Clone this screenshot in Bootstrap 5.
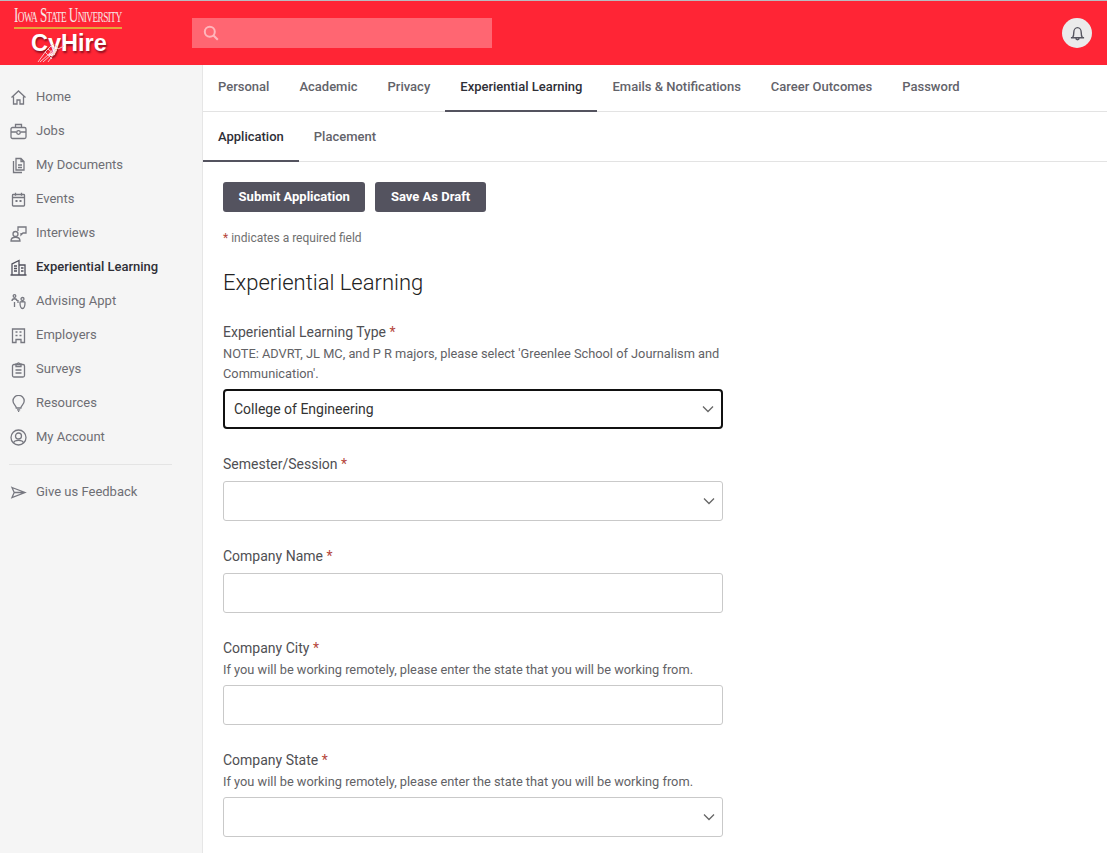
<!DOCTYPE html>
<html lang="en">
<head>
<meta charset="utf-8">
<title>CyHire</title>
<link rel="stylesheet" href="https://cdn.jsdelivr.net/npm/bootstrap@5.3.0/dist/css/bootstrap.min.css">
<style>
html,body{height:853px;overflow:hidden}
body{font-family:Roboto,"Liberation Sans",sans-serif;font-size:14px;color:#333;background:#fff}
.topbar{height:65px;background:#ff2535;border-top:1px solid #b8bcc0}
.logo-box{width:192px;height:64px;position:relative;flex:none}
.logo-isu{position:absolute;left:14px;top:2px;font-family:"Liberation Serif",serif;color:#f7e6e6;font-size:21px;line-height:24px;letter-spacing:-1px;white-space:nowrap;font-variant:small-caps;transform:scaleX(.625);transform-origin:left}
.logo-line{position:absolute;left:14px;top:26px;width:108px;height:2px;background:#e8a33a}
.logo-cy{position:absolute;left:31px;top:29px;font-family:"Liberation Sans",sans-serif;font-weight:700;font-size:23.5px;line-height:26px;color:#fff;text-shadow:1px 2px 2px #8a1020;white-space:nowrap}
.logo-foot{position:absolute;left:37px;top:41px}
.searchbox{width:300px;height:30px;background:#ff6672;margin-top:17px;padding-left:11px}
.bell-btn{width:30px;height:30px;background:#ebebeb;margin-right:15px}
.sidebar{width:203px;height:788px;background:#f5f5f5;border-right:1px solid #e6e6e6;padding-top:15px;flex:none}
.side-link{height:34px;padding-left:10px;color:#6e6e74;font-size:13px;text-decoration:none;gap:9px}
.side-link svg{width:17px;height:17px;flex:none;fill:none;stroke:#777880;stroke-width:1.3}
.side-link.on{color:#2f2f37;font-weight:500}
.side-link.on svg{stroke:#50505c}
.side-rule{margin:10px 30px 10px 9px;border-top:1px solid #e4e4e4;opacity:1}
.tabrow{border-bottom:1px solid #e3e3e3;padding:0}
.tabrow a{display:block;padding:0 15px;color:#63636a;font-size:13px;font-weight:500;text-decoration:none;margin-bottom:-1px;border-bottom:2px solid transparent}
.tabrow a.on{color:#2f2f37;border-bottom-color:#54535f}
.tab-one{height:47px}
.tab-one a{line-height:44px;height:47px}
.tab-two{height:50px}
.tab-two a{line-height:49px;height:50px}
.pane{padding:20px 20px 0}
.btn-row{gap:10px}
.btn-dk{background:#54535f;color:#fff;font-size:13px;font-weight:700;height:30px;padding:0 15.6px;border:0;border-radius:3px;line-height:30px}
.req-note{font-size:12px;color:#6f6f6f;margin:18px 0 0;line-height:16px}
.req{color:#b5473c}
.pane-title{font-size:22px;font-weight:300;color:#222;line-height:28px;margin:23px 0 0}
.fld{width:500px}
.fld-first{margin-top:25px}
.fld-label{font-size:14px;color:#4f4f53;line-height:20px;margin:0;display:block}
.fld-help{font-size:12.8px;color:#626266;line-height:20px;padding-top:2px}
.fld-input{height:40px;border:1px solid #c9c9c9;border-radius:3px;font-size:14px;color:#333;padding:0 30px 0 10px;margin-top:7px}
.fld-input.form-select{background-image:url("data:image/svg+xml,%3csvg xmlns='http://www.w3.org/2000/svg' viewBox='0 0 12 8'%3e%3cpath fill='none' stroke='%23666' stroke-width='1.3' d='M1 1.500 6 6.500 11 1.500'/%3e%3c/svg%3e");background-size:12px 8px;background-position:right 7px center;padding-right:30px}
.fld-input.focused{border:2px solid #111;border-radius:4px;padding-left:9px;margin-top:5px;height:40px}
.fld-input.notop{margin-top:5px}
.fld-gap{margin-top:25px}
</style>
</head>
<body>
<header class="topbar d-flex">
  <div class="logo-box">
    <div class="logo-isu">Iowa State University</div>
    <div class="logo-line"></div>
    <div class="logo-cy">CyHire</div>
    <svg class="logo-foot" width="28" height="21" viewBox="0 0 28 21" fill="none" stroke="#f6c6ca" stroke-width="1"><path d="M1 20 9 9 16 2M3 20 12 12 18 5M6 20 15 12 19 7M11 20 19 9M18 2 21 7 27 4M8 10 15 17M11 7 18 13M14 4 20 9"/></svg>
  </div>
  <div class="searchbox d-flex align-items-center">
    <svg width="16" height="16" viewBox="0 0 16 16" fill="none" stroke="#ffb6bc" stroke-width="2"><circle cx="6.800" cy="6.800" r="5"/><path d="m10.500 10.500 4.300 4.300"/></svg>
  </div>
  <div class="ms-auto d-flex align-items-center">
    <div class="bell-btn rounded-circle d-flex align-items-center justify-content-center">
      <svg width="17" height="17" viewBox="0 0 16 16" fill="none" stroke="#55555f" stroke-width="1.3"><path d="M3.500 11.500c.8-1 1-2 1-4.500C4.500 4.500 6 2.500 8 2.500s3.500 2 3.500 4.500c0 2.500.2 3.500 1 4.500M1.800 12h12.400M6.500 12.500c0 1.800 3 1.800 3 0"/></svg>
    </div>
  </div>
</header>
<div class="d-flex">
  <nav class="sidebar">
    <a class="side-link d-flex align-items-center" href="#"><svg viewBox="0 0 17 17"><path d="M1.500 8.500 8.500 2l7 6.500M3.500 7.500V15h3.500v-4h3v4h3.500V7.500"/></svg>Home</a>
    <a class="side-link d-flex align-items-center" href="#"><svg viewBox="0 0 17 17"><rect x="1" y="4.500" width="15" height="11" rx="1.500"/><path d="M5.500 4.500V1.500h6v3M1 9h5.500M10.500 9H16"/><circle cx="8.500" cy="9.500" r="1.800"/></svg>Jobs</a>
    <a class="side-link d-flex align-items-center" href="#"><svg viewBox="0 0 17 17"><path d="M6 1.500h5l3 3V13H6zM11 1.500v3h3M8 8h4M8 10.500h4"/><path d="M3.500 4v11.500H12"/></svg>My Documents</a>
    <a class="side-link d-flex align-items-center" href="#"><svg viewBox="0 0 17 17"><rect x="2.500" y="3.500" width="12" height="11.500" rx=".8"/><path d="M2.500 6.500h12M5.500 1.800v3M11.500 1.800v3"/><path d="M5.500 10h2M9.500 10h2" stroke-width="2"/></svg>Events</a>
    <a class="side-link d-flex align-items-center" href="#"><svg viewBox="0 0 17 17"><circle cx="5.500" cy="9" r="2.500"/><path d="M1 16c0-5 9-5 9 0zM8 6V2h8v6h-3l-2 2V8"/></svg>Interviews</a>
    <a class="side-link on d-flex align-items-center" href="#"><svg viewBox="0 0 17 17"><path d="M.5 16h16M2 16V5l7-3.500V16M9 6h6v10M4 7h3M4 9.500h3M4 12h3M11 9h2.500M11 12h2.500"/></svg>Experiential Learning</a>
    <a class="side-link d-flex align-items-center" href="#"><svg viewBox="0 0 17 17"><circle cx="4.500" cy="3" r="1.300"/><path d="M2 8c0-3 5-3 5 0M8 7v3M4.500 9v5"/><circle cx="12.500" cy="6" r="1.500"/><path d="M10 9.500c0 5 1.500 6 2.500 6s2.500-1 2.500-6c0-1-5-1-5 0z"/></svg>Advising Appt</a>
    <a class="side-link d-flex align-items-center" href="#"><svg viewBox="0 0 17 17"><path d="M2.500 2h12v13.500H11v-3H6v3H2.500z"/><path d="M5.500 5h2M9.500 5h2M5.500 8.500h2M9.500 8.500h2" stroke-width="1.600"/></svg>Employers</a>
    <a class="side-link d-flex align-items-center" href="#"><svg viewBox="0 0 17 17"><rect x="2.500" y="3.500" width="12" height="12.500" rx="1.500"/><path d="M6 5.500V2.800h1.500a1 1 0 0 1 2 0H11v2.700zM5.500 9h6M5.500 12h6"/></svg>Surveys</a>
    <a class="side-link d-flex align-items-center" href="#"><svg viewBox="0 0 17 17"><path d="M6.300 13c0-2.500-3.300-3.500-3.300-7a5.600 5.600 0 0 1 11.200 0c0 3.500-3.300 4.500-3.300 7zM7 14.800h3.200M8 16.300h1.200"/></svg>Resources</a>
    <a class="side-link d-flex align-items-center" href="#"><svg viewBox="0 0 17 17"><circle cx="8.500" cy="8.500" r="7.500"/><circle cx="8.500" cy="7" r="3"/><path d="M3.500 14c.8-3.500 9.200-3.500 10 0"/></svg>My Account</a>
    <hr class="side-rule">
    <a class="side-link d-flex align-items-center" href="#"><svg viewBox="0 0 17 17"><path d="M2 3.500 15 8.500 2 13.500l2.200-5zM4.200 8.500H15"/></svg>Give us Feedback</a>
  </nav>
  <main class="flex-grow-1">
    <div class="tabrow tab-one d-flex">
      <a href="#">Personal</a><a href="#">Academic</a><a href="#">Privacy</a><a class="on" href="#">Experiential Learning</a><a href="#">Emails &amp; Notifications</a><a href="#">Career Outcomes</a><a href="#">Password</a>
    </div>
    <div class="tabrow tab-two d-flex">
      <a class="on" href="#">Application</a><a href="#">Placement</a>
    </div>
    <div class="pane">
      <div class="d-flex btn-row">
        <button class="btn btn-dk" type="button">Submit Application</button>
        <button class="btn btn-dk" type="button">Save As Draft</button>
      </div>
      <p class="req-note"><span class="req">*</span> indicates a required field</p>
      <h2 class="pane-title">Experiential Learning</h2>
      <div class="fld fld-first">
        <label class="fld-label">Experiential Learning Type <span class="req">*</span></label>
        <div class="fld-help">NOTE: ADVRT, JL MC, and P R majors, please select 'Greenlee School of Journalism and Communication'.</div>
        <select class="form-select fld-input focused"><option>College of Engineering</option></select>
      </div>
      <div class="fld fld-gap">
        <label class="fld-label">Semester/Session <span class="req">*</span></label>
        <select class="form-select fld-input"><option></option></select>
      </div>
      <div class="fld fld-gap">
        <label class="fld-label">Company Name <span class="req">*</span></label>
        <input class="form-control fld-input" type="text">
      </div>
      <div class="fld fld-gap">
        <label class="fld-label">Company City <span class="req">*</span></label>
        <div class="fld-help">If you will be working remotely, please enter the state that you will be working from.</div>
        <input class="form-control fld-input notop" type="text">
      </div>
      <div class="fld fld-gap">
        <label class="fld-label">Company State <span class="req">*</span></label>
        <div class="fld-help">If you will be working remotely, please enter the state that you will be working from.</div>
        <select class="form-select fld-input notop"><option></option></select>
      </div>
    </div>
  </main>
</div>
</body>
</html>
